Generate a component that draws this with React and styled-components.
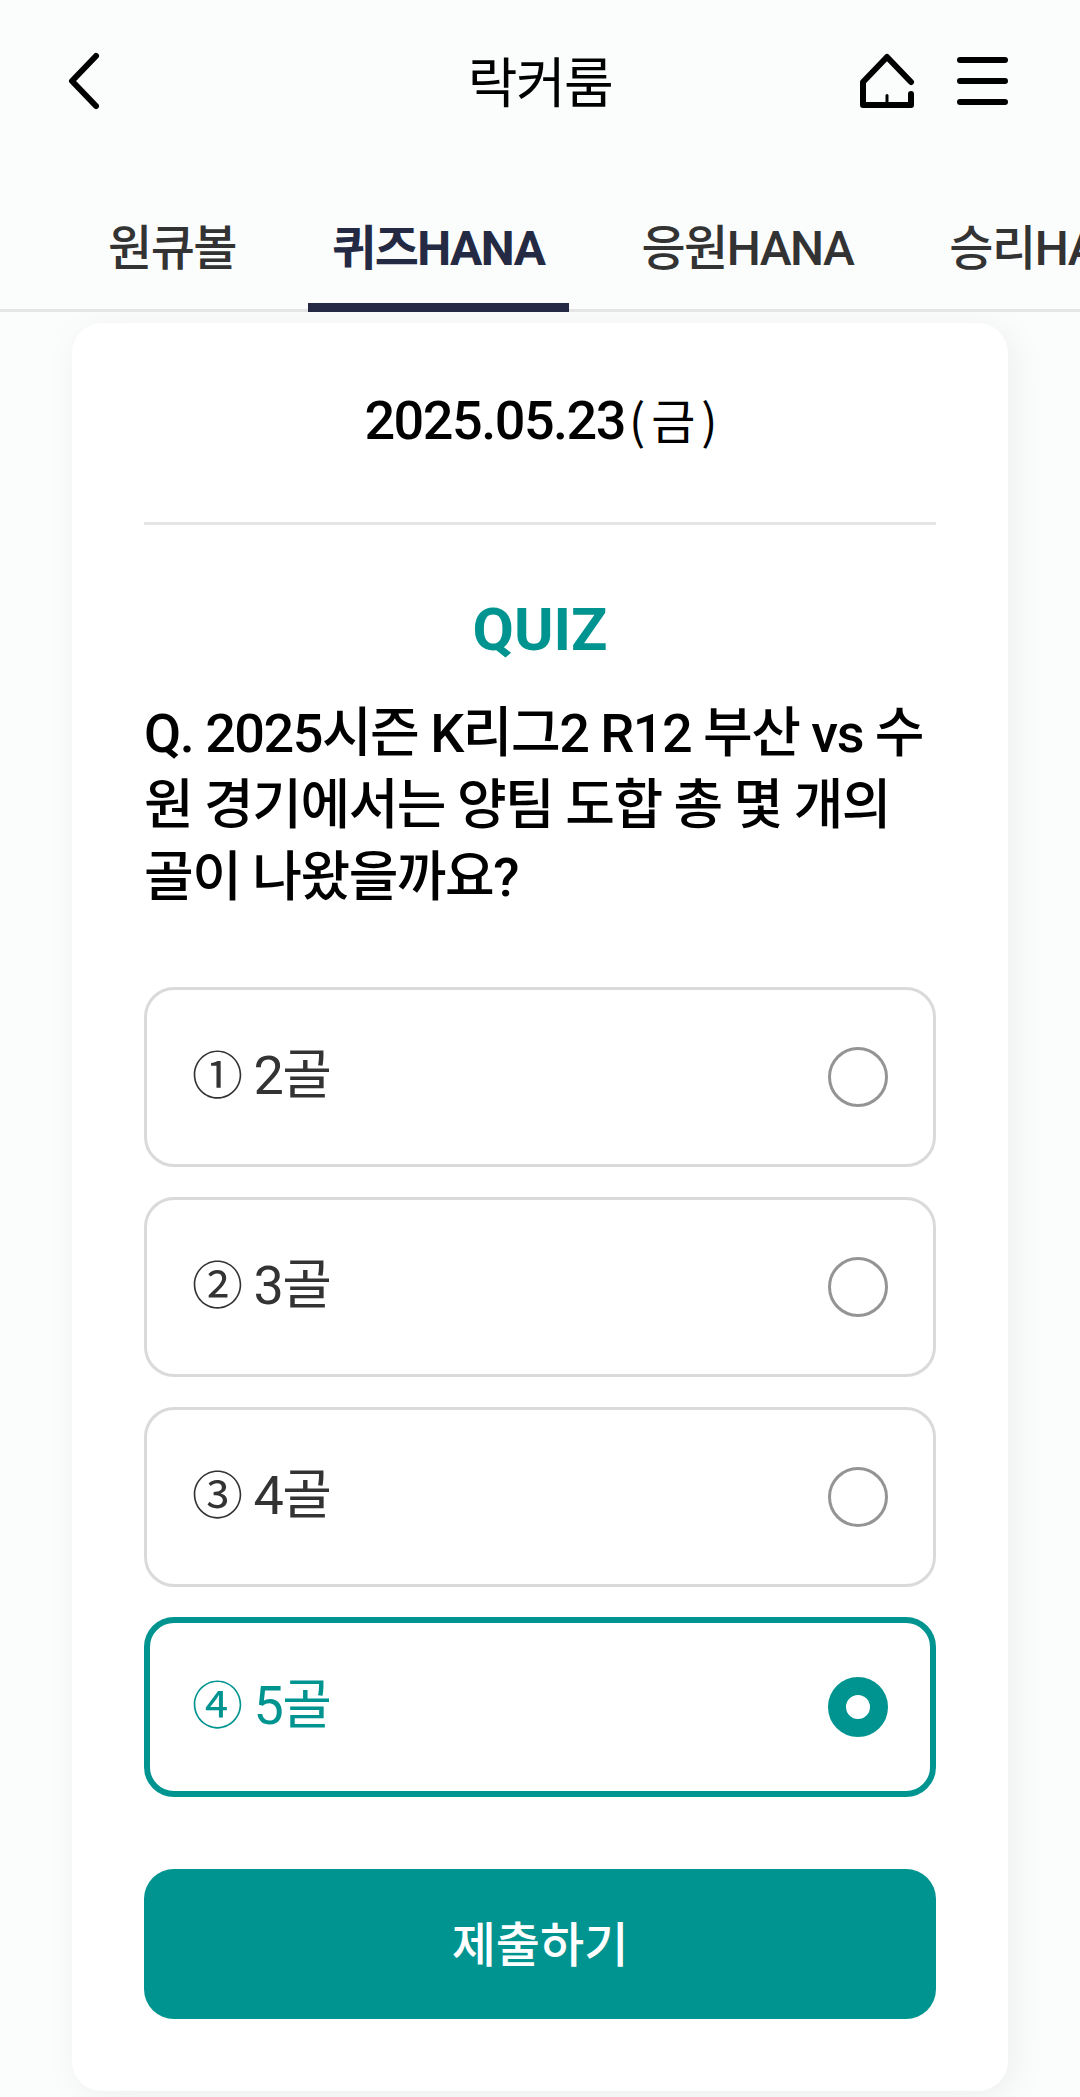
import React, { useState } from 'react';
import styled, { createGlobalStyle } from 'styled-components';

const GlobalStyle = createGlobalStyle`
  * {
    box-sizing: border-box;
  }
  body {
    margin: 0;
    background: #fbfdfc;
    color: #000;
    font-family: Roboto, 'Noto Sans CJK KR', sans-serif;
    font-size: 54px;
    letter-spacing: -1.5px;
  }
`;

const Screen = styled.div`
  width: 1080px;
  height: 2097px;
  overflow: hidden;
`;

const TopArea = styled.header`
  position: relative;
  z-index: 1;
  height: 312px;
  background: #fbfdfc;
`;

const TitleBar = styled.div`
  height: 162px;
  display: grid;
  grid-template-columns: 1fr auto 1fr;
  align-items: center;
  padding: 0 69px 0 66px;
`;

const Title = styled.h1`
  margin: 0;
  padding: 8px 0 0 3px;
  font-size: 54px;
  font-weight: 400;
  line-height: 78px;
`;

const IconButton = styled.button`
  display: flex;
  padding: 0;
  border: none;
  background: none;
  color: #000;
  cursor: pointer;
`;

const Actions = styled.div`
  display: flex;
  justify-content: flex-end;
  gap: 37px;
`;

const TabList = styled.nav`
  height: 150px;
  display: flex;
  gap: 48px;
  padding-left: 84px;
  overflow: hidden;
  box-shadow: inset 0 -3px 0 #e4e5e4;
`;

const Tab = styled.div`
  flex: none;
  padding: 0 ${props => (props.$active ? 25 : 24)}px 0 24px;
  border-bottom: 9px solid ${props => (props.$active ? '#252a44' : 'transparent')};
  color: ${props => (props.$active ? '#252a44' : '#333')};
  font-size: 48px;
  font-weight: ${props => (props.$active ? 700 : 500)};
  line-height: 174px;
  white-space: nowrap;
  cursor: pointer;
`;

const Card = styled.main`
  width: 936px;
  height: 1768px;
  margin: 11px auto 0;
  padding: 0 72px;
  background: #fff;
  border-radius: 30px;
  box-shadow: 6px 6px 36px rgba(0, 0, 0, 0.06);
`;

const QuizDate = styled.div`
  height: 202px;
  padding-top: 56px;
  border-bottom: 3px solid #e4e4e4;
  font-weight: 500;
  line-height: 78px;
  text-align: center;
`;

const Weekday = styled.span`
  margin: 0 -8px 0 4px;
  font-family: 'Noto Sans CJK KR', sans-serif;
  font-size: 48px;
  font-weight: 400;
  letter-spacing: 6px;
`;

const QuizTitle = styled.h2`
  margin: 66px 0 0;
  color: #009490;
  font-size: 60px;
  font-weight: 700;
  letter-spacing: 0;
  line-height: 78px;
  text-align: center;
`;

const Question = styled.p`
  margin: 29px 0 0;
  font-weight: 500;
  line-height: 72px;
  word-break: break-all;
`;

const OptionList = styled.div`
  display: flex;
  flex-direction: column;
  gap: 30px;
  margin-top: 73px;
`;

const Option = styled.div`
  height: 180px;
  display: flex;
  align-items: center;
  justify-content: space-between;
  padding: 0 ${props => (props.$selected ? 42 : 45)}px;
  border: ${props => (props.$selected ? '6px solid #009490' : '3px solid #dadada')};
  border-radius: 30px;
  color: ${props => (props.$selected ? '#009490' : '#333')};
  line-height: 78px;
  cursor: pointer;
`;

const OptionText = styled.span`
  padding-bottom: 2px;
`;

const OptionNumber = styled.span`
  font-size: 51px;
`;

const Radio = styled.span`
  width: 60px;
  height: 60px;
  border: ${props => (props.$checked ? '18px solid #009490' : '3px solid #949494')};
  border-radius: 50%;
`;

const SubmitButton = styled.button`
  display: block;
  width: 100%;
  height: 150px;
  margin-top: 72px;
  padding: 0 0 7px;
  border: none;
  border-radius: 30px;
  background: #009490;
  color: #fff;
  font-family: inherit;
  font-size: 48px;
  font-weight: 500;
  letter-spacing: 0;
  cursor: pointer;
`;

const BackIcon = () => (
  <svg width="36" height="60" viewBox="0 0 36 60" fill="none" stroke="currentColor" strokeWidth="6" strokeLinecap="round" strokeLinejoin="round">
    <path d="M30 5 6 30l24 25" />
  </svg>
);

const HomeIcon = () => (
  <svg width="60" height="60" viewBox="0 0 60 60" fill="none" stroke="currentColor" strokeWidth="6" strokeLinecap="round" strokeLinejoin="round">
    <path d="M54 31 30 6 6 31v23h48V43" />
    <path d="M30 44.5V52" strokeWidth="3" />
  </svg>
);

const MenuIcon = () => (
  <svg width="57" height="60" viewBox="0 0 57 60" fill="none" stroke="currentColor" strokeWidth="6" strokeLinecap="round">
    <path d="M6 9h45M6 30h45M6 51h45" />
  </svg>
);

const tabs = ['원큐볼', '퀴즈HANA', '응원HANA', '승리HANA'];

const options = [
  { number: '①', label: '2골' },
  { number: '②', label: '3골' },
  { number: '③', label: '4골' },
  { number: '④', label: '5골' },
];

const App = () => {
  const [tab, setTab] = useState(1);
  const [selected, setSelected] = useState(3);

  return (
    <Screen>
      <GlobalStyle />
      <TopArea>
        <TitleBar>
          <IconButton aria-label="뒤로"><BackIcon /></IconButton>
          <Title>락커룸</Title>
          <Actions>
            <IconButton aria-label="홈"><HomeIcon /></IconButton>
            <IconButton aria-label="메뉴"><MenuIcon /></IconButton>
          </Actions>
        </TitleBar>
        <TabList>
          {tabs.map((label, i) => (
            <Tab key={label} $active={i === tab} onClick={() => setTab(i)}>{label}</Tab>
          ))}
        </TabList>
      </TopArea>
      <Card>
        <QuizDate>
          2025.05.23<Weekday>(금)</Weekday>
        </QuizDate>
        <QuizTitle>QUIZ</QuizTitle>
        <Question>
          Q. 2025시즌 K리그2 R12 부산 vs 수원 경기에서는 양팀 도합 총 몇 개의 골이 나왔을까요?
        </Question>
        <OptionList>
          {options.map(({ number, label }, i) => (
            <Option key={number} $selected={i === selected} onClick={() => setSelected(i)}>
              <OptionText><OptionNumber>{number}</OptionNumber> {label}</OptionText>
              <Radio $checked={i === selected} />
            </Option>
          ))}
        </OptionList>
        <SubmitButton>제출하기</SubmitButton>
      </Card>
    </Screen>
  );
};

export default App;
